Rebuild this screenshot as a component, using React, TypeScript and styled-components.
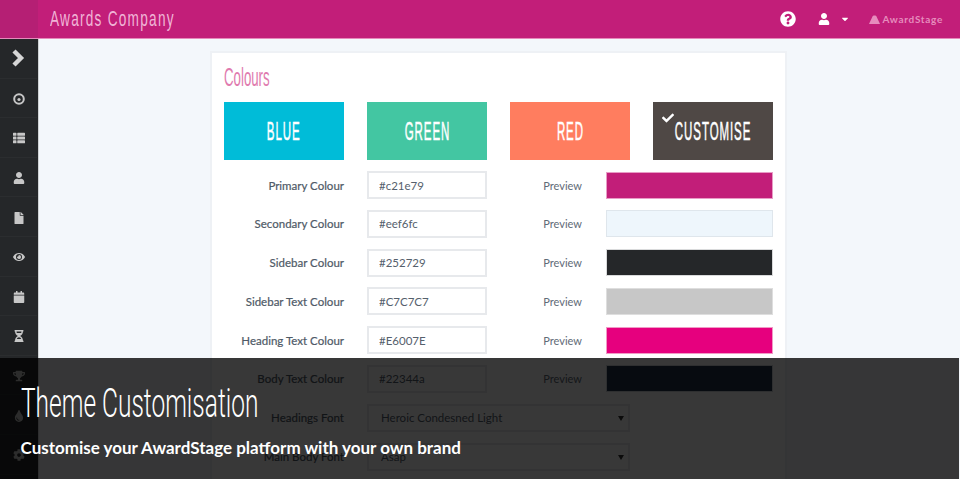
import React from "react";
import styled, { createGlobalStyle } from "styled-components";
import {
  FaThList, FaUser, FaFile, FaEye, FaCalendar,
  FaHourglassHalf, FaTrophy, FaTint, FaCog, FaCheck, FaQuestionCircle, FaCaretDown,
} from "react-icons/fa";

const Global = createGlobalStyle`
  html, body { margin: 0; padding: 0; background: #f3f7fb; }
  body { font-family: "Lato", "Noto Sans", sans-serif; }
`;

const Page = styled.div`
  position: relative;
  width: 960px;
  height: 479px;
  overflow: hidden;
  background: #f3f7fb;
  display: flex;
  flex-direction: column;
`;

const Header = styled.header`
  flex: none;
  height: 38px;
  display: flex;
  align-items: center;
  background: #c21e79;
  border-bottom: 1px solid #e58abb;
`;

const Corner = styled.div`
  flex: none;
  width: 38px;
  height: 100%;
  background: #b51f74;
`;

const Condensed = styled.span<{ $scale: number; $origin?: string }>`
  display: inline-block;
  white-space: nowrap;
  transform: scaleX(${(p) => p.$scale});
  transform-origin: ${(p) => p.$origin || "left center"};
`;

const Brand = styled.div`
  margin-left: 12px;
  flex: 1;
  font: 400 22px "Liberation Sans", sans-serif;
  letter-spacing: 2px;
  color: #f0b4d6;
  line-height: 38px;
`;

const HeaderTools = styled.div`
  display: flex;
  align-items: center;
  color: #fff;
  padding-right: 17px;
`;

const HelpIcon = styled(FaQuestionCircle)`
  font-size: 16px;
  margin-right: 22px;
`;

const UserIcon = styled(FaUser)`
  font-size: 12px;
  margin-right: 10px;
`;

const Caret = styled(FaCaretDown)`
  font-size: 10px;
  margin-right: 19px;
`;

const Maker = styled.div`
  display: flex;
  align-items: center;
  gap: 2px;
  color: #e68cbd;
  font: 700 10px "Lato", sans-serif;
  letter-spacing: 0.7px;
`;

const Body = styled.div`
  flex: 1;
  display: flex;
  min-height: 0;
`;

const Sidebar = styled.nav`
  flex: none;
  width: 38px;
  background: #252729;
  border-right: 1px solid #cfd2d4;
`;

const SideItem = styled.div`
  height: 39.6px;
  box-sizing: border-box;
  padding-top: 2px;
  display: flex;
  align-items: center;
  justify-content: center;
  color: #c7c7c7;
  font-size: 12px;
  border-bottom: 1px solid #2b2d2f;
  margin-right: 1px;
`;

const Chevron = styled.svg`
  margin: -2px 0 0 -1px;
`;

const Main = styled.main`
  flex: 1;
  padding: 12px 0 0 171px;
`;

const Card = styled.section`
  width: 577px;
  height: 500px;
  box-sizing: border-box;
  background: #fff;
  border: 2px solid #eef1f5;
  padding: 0 12px;
`;

const CardTitle = styled.h2`
  margin: 12px 0 12px;
  font: 400 25px/25px "Liberation Sans", sans-serif;
  color: #e07aae;
`;

const Themes = styled.div`
  display: grid;
  grid-template-columns: repeat(4, 120px);
  column-gap: 23px;
  margin-bottom: 11px;
`;

const Theme = styled.div<{ $color: string }>`
  position: relative;
  height: 58px;
  background: ${(p) => p.$color};
  color: #fff;
  display: flex;
  align-items: center;
  justify-content: center;
  font: 400 25px "Liberation Sans", sans-serif;
  letter-spacing: 2px;
  -webkit-text-stroke: 0.5px #fff;
`;

const Tick = styled(FaCheck)`
  position: absolute;
  left: 9px;
  top: 10px;
  font-size: 12px;
`;

const Row = styled.div`
  display: grid;
  grid-template-columns: 120px 120px 73px 167px;
  column-gap: 23px;
  align-items: center;
  height: 28px;
  margin-bottom: 10.8px;
`;

const FieldLabel = styled.label`
  text-align: right;
  font-size: 11.5px;
  color: #4f5a67;
  white-space: nowrap;
  -webkit-text-stroke: 0.2px #4f5a67;
`;

const Field = styled.input`
  width: 100%;
  height: 28px;
  box-sizing: border-box;
  border: 2px solid #e7e9ec;
  padding: 0 10px;
  font: 400 11.5px "Lato", sans-serif;
  color: #55606c;
  background: #fff;
  outline: none;
`;

const PreviewLabel = styled.span`
  font-size: 11px;
  color: #5f6b78;
  text-align: right;
  padding-right: 1px;
`;

const Swatch = styled.div<{ $color: string; $line: string }>`
  height: 27px;
  box-sizing: border-box;
  background: ${(p) => p.$color};
  border: 1px solid ${(p) => p.$line};
`;

const SelectRow = styled(Row)`
  grid-template-columns: 120px 263px;
`;

const SelectBox = styled.div`
  position: relative;
  height: 28px;
  &::after {
    content: "";
    position: absolute;
    right: 6px;
    top: 12px;
    border-left: 3px solid transparent;
    border-right: 3px solid transparent;
    border-top: 5px solid #333;
  }
`;

const Select = styled.select`
  width: 100%;
  height: 28px;
  box-sizing: border-box;
  appearance: none;
  border: 2px solid #e7e9ec;
  border-radius: 0;
  padding: 0 12px;
  font: 400 11.5px "Lato", sans-serif;
  color: #55606c;
  background: #fff;
  outline: none;
`;

const Overlay = styled.aside`
  position: absolute;
  left: 0;
  right: 1px;
  top: 358px;
  bottom: 0;
  background: rgba(0, 0, 0, 0.78);
  color: #fff;
  padding-left: 20.5px;
`;

const OverlayTitle = styled.h1`
  margin: 21px 0 0;
  font: 300 41px/48px "Roboto", sans-serif;
  color: #fff;
`;

const OverlayText = styled.p`
  margin: 11px 0 0;
  font: 700 17px/20px "Lato", "Noto Sans", sans-serif;
  color: #fff;
`;

const swatchRows = [
  ["Primary Colour", "#c21e79", "#c21e79", "#e89cc6"],
  ["Secondary Colour", "#eef6fc", "#eef6fc", "#dfe6ec"],
  ["Sidebar Colour", "#252729", "#252729", "#d9dadb"],
  ["Sidebar Text Colour", "#C7C7C7", "#c7c7c7", "#dedede"],
  ["Heading Text Colour", "#E6007E", "#e6007e", "#f09ac6"],
  ["Body Text Colour", "#22344a", "#22344a", "#d0d4d8"],
];

const Gauge = () => (
  <svg width="12" height="12" viewBox="0 0 12 12" fill="none">
    <circle cx="6" cy="6" r="4.8" stroke="#c7c7c7" strokeWidth="2" />
    <circle cx="6" cy="6.5" r="1.6" fill="#c7c7c7" />
  </svg>
);

const sideIcons = [FaThList, FaUser, FaFile, FaEye, FaCalendar, FaHourglassHalf, FaTrophy, FaTint, FaCog];

export default function App() {
  return (
    <Page>
      <Global />
      <Header>
        <Corner />
        <Brand><Condensed $scale={0.62}>Awards Company</Condensed></Brand>
        <HeaderTools>
          <HelpIcon />
          <UserIcon />
          <Caret />
          <Maker>
            <svg width="11" height="9" viewBox="0 0 11 9" fill="#e68cbd">
              <path d="M0 9 L3.5 1.5 L4.5 0.5 H6.5 L7.5 1.5 L11 9 Z" />
            </svg>
            AwardStage
          </Maker>
        </HeaderTools>
      </Header>
      <Body>
        <Sidebar>
          <SideItem>
            <Chevron width="14" height="18" viewBox="0 0 14 18" fill="none">
              <path d="M3 2 L10 9 L3 16" stroke="#d6d6d6" strokeWidth="4.4" />
            </Chevron>
          </SideItem>
          <SideItem><Gauge /></SideItem>
          {sideIcons.map((Icon, i) => (
            <SideItem key={i}><Icon /></SideItem>
          ))}
        </Sidebar>
        <Main>
          <Card>
            <CardTitle><Condensed $scale={0.53}>Colours</Condensed></CardTitle>
            <Themes>
              <Theme $color="#00bcd8"><Condensed $scale={0.46} $origin="center">BLUE</Condensed></Theme>
              <Theme $color="#43c6a2"><Condensed $scale={0.46} $origin="center">GREEN</Condensed></Theme>
              <Theme $color="#ff7d5f"><Condensed $scale={0.46} $origin="center">RED</Condensed></Theme>
              <Theme $color="#4f4845"><Tick /><Condensed $scale={0.46} $origin="center">CUSTOMISE</Condensed></Theme>
            </Themes>
            {swatchRows.map(([label, value, color, line]) => (
              <Row key={label}>
                <FieldLabel>{label}</FieldLabel>
                <Field readOnly value={value} />
                <PreviewLabel>Preview</PreviewLabel>
                <Swatch $color={color} $line={line} />
              </Row>
            ))}
            <SelectRow>
              <FieldLabel>Headings Font</FieldLabel>
              <SelectBox>
                <Select defaultValue="Heroic Condesned Light"><option>Heroic Condesned Light</option></Select>
              </SelectBox>
            </SelectRow>
            <SelectRow>
              <FieldLabel>Main Body Font</FieldLabel>
              <SelectBox>
                <Select defaultValue="Asap"><option>Asap</option></Select>
              </SelectBox>
            </SelectRow>
          </Card>
        </Main>
      </Body>
      <Overlay>
        <OverlayTitle><Condensed $scale={0.597}>Theme Customisation</Condensed></OverlayTitle>
        <OverlayText>Customise your AwardStage platform with your own brand</OverlayText>
      </Overlay>
    </Page>
  );
}
